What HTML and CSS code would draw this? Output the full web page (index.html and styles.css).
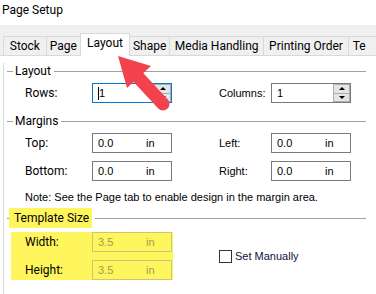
FILE: index.html
```html
<!DOCTYPE html>
<html lang="en">
<head>
    <meta charset="UTF-8">
    <title>Page Setup</title>
    <link rel="stylesheet" href="styles.css">
</head>
<body>
    <div class="dialog">
        <div class="title">Page Setup</div>

        <div class="tabs">
            <div class="tab w-stock">Stock</div>
            <div class="tab w-page">Page</div>
            <div class="tab w-layout active">Layout</div>
            <div class="tab w-shape">Shape</div>
            <div class="tab w-media">Media Handling</div>
            <div class="tab w-order">Printing Order</div>
            <div class="tab w-te">Te</div>
        </div>

        <div class="panel">
            <div class="group-head head-layout"><span class="gh-text">Layout</span></div>
            <div class="row">
                <span class="lbl">Rows:</span>
                <div class="field focused">
                    <span class="caret"></span><span class="val">1</span>
                    <div class="spin"><span class="spin-btn up"></span><span class="spin-btn down"></span></div>
                </div>
                <span></span>
                <span class="lbl tahoma">Columns:</span>
                <div class="field">
                    <span class="val">1</span>
                    <div class="spin"><span class="spin-btn up"></span><span class="spin-btn down"></span></div>
                </div>
            </div>

            <div class="group-head head-margins"><span class="gh-text">Margins</span></div>
            <div class="row">
                <span class="lbl">Top:</span>
                <div class="field"><span class="val">0.0</span><span class="unit">in</span></div>
                <span></span>
                <span class="lbl tahoma">Left:</span>
                <div class="field"><span class="val">0.0</span><span class="unit">in</span></div>
            </div>
            <div class="row row-second">
                <span class="lbl">Bottom:</span>
                <div class="field"><span class="val">0.0</span><span class="unit">in</span></div>
                <span></span>
                <span class="lbl tahoma">Right:</span>
                <div class="field"><span class="val">0.0</span><span class="unit">in</span></div>
            </div>
            <p class="note">Note: See the Page tab to enable design in the margin area.</p>

            <div class="group-head head-template"><span class="gh-text marked">Template Size</span></div>
            <div class="template-body">
                <div class="marked-block">
                    <div class="size-row">
                        <span class="lbl">Width:</span>
                        <div class="field disabled"><span class="val">3.5</span><span class="unit">in</span></div>
                    </div>
                    <div class="size-row">
                        <span class="lbl">Height:</span>
                        <div class="field disabled"><span class="val">3.5</span><span class="unit">in</span></div>
                    </div>
                </div>
                <label class="check">
                    <span class="check-box"></span>
                    <span class="check-text">Set Manually</span>
                </label>
            </div>
        </div>

        <!-- callout arrow pointing at the Layout tab -->
        <svg class="arrow" width="376" height="294" viewBox="0 0 376 294">
            <line x1="137" y1="76" x2="163" y2="104" stroke="#f2434c" stroke-width="13" stroke-linecap="round"/>
            <polygon points="118,56 151,66 127,88" fill="#f2434c"/>
        </svg>
    </div>
</body>
</html>
```

FILE: styles.css
```css
body {
    margin: 0;
    padding: 0;
    background: white;
    font-family: Roboto, Arial, sans-serif;
    font-size: 12px;
    color: black;
}
.dialog {
    position: relative;
    width: 376px;
    height: 294px;
    overflow: hidden;
}
.title {
    height: 25px;
    padding-left: 2px;
    line-height: 21px;
    box-sizing: border-box;
}
.tabs {
    display: flex;
    align-items: flex-end;
    height: 31px;
    padding-left: 3px;
    background-color: #f0f0f0;
    border-bottom: 1px solid #d9d9d9;
    box-sizing: border-box;
}
.tab {
    height: 19px;
    line-height: 18px;
    text-align: center;
    border: 1px solid #d9d9d9;
    border-bottom: none;
    margin-right: -1px;
    box-sizing: border-box;
    white-space: nowrap;
    overflow: hidden;
}
.tab.active {
    height: 23px;
    margin-bottom: -1px;
    line-height: 18px;
    background-color: white;
    position: relative;
    z-index: 1;
}
.w-stock { width: 45px; }
.w-page { width: 36px; }
.w-layout { width: 52px; }
.w-shape { width: 42px; }
.w-media { width: 98px; }
.w-order { width: 88px; }
.w-te { width: 30px; text-align: left; padding-left: 4px; }
.panel {
    margin-left: 3px;
    border-left: 1px solid #d9d9d9;
    height: 238px;
    padding-right: 10px;
    background: white;
}
.group-head {
    display: flex;
    align-items: center;
    height: 16px;
}
.group-head::before {
    content: "";
    width: 6px;
    height: 1px;
    margin-left: 3px;
    margin-right: 2px;
    background-color: #a0a0a0;
}
.group-head::after {
    content: "";
    flex: 1;
    height: 1px;
    margin-left: 3px;
    background-color: #a0a0a0;
}
.head-layout { margin-top: 7px; }
.head-margins { margin-top: 10px; }
.head-template {
    margin-top: 3px;
    height: 20px;
}
.head-template::before {
    width: 2px;
    margin-right: 0;
}
.marked {
    background-color: #fff55c;
    height: 20px;
    line-height: 20px;
    padding: 0 3px 0 5px;
}
.row {
    display: grid;
    grid-template-columns: 67px 80px 47px 52px 80px;
    align-items: center;
    height: 20px;
    margin-top: 4px;
    padding-left: 21px;
}
.row-second { margin-top: 8px; }
.lbl {
    white-space: nowrap;
}
.tahoma, .field, .check-text {
    font-family: "Liberation Sans", Arial, sans-serif;
    font-size: 11px;
}
.field {
    display: flex;
    align-items: center;
    width: 80px;
    height: 20px;
    padding-left: 5px;
    border: 1px solid #7a7a7a;
    box-sizing: border-box;
    background-color: white;
}
.field.focused {
    border-color: #0078d7;
}
.caret {
    width: 1px;
    height: 13px;
    background: black;
}
.val {
    width: 48px;
}
.spin {
    display: flex;
    flex-direction: column;
    margin-left: auto;
    width: 17px;
    height: 18px;
}
.spin-btn {
    flex: 1;
    display: flex;
    align-items: center;
    justify-content: center;
    background-color: #e5e5e5;
    border: 1px solid #adadad;
    box-sizing: border-box;
}
.spin-btn.down {
    margin-top: -1px;
}
.spin-btn.up::after {
    content: "";
    border-left: 3px solid transparent;
    border-right: 3px solid transparent;
    border-bottom: 3px solid black;
}
.spin-btn.down::after {
    content: "";
    border-left: 3px solid transparent;
    border-right: 3px solid transparent;
    border-top: 3px solid black;
}
.note {
    margin: 8px 0 0 21px;
    line-height: 16px;
    white-space: nowrap;
    font-family: "Liberation Sans", Arial, sans-serif;
    font-size: 11px;
}
.template-body {
    display: flex;
    align-items: center;
    margin-top: 4px;
}
.marked-block {
    display: flex;
    flex-direction: column;
    gap: 8px;
    width: 162px;
    margin-left: 7px;
    padding-left: 14px;
    box-sizing: border-box;
    background-color: #fff55c;
}
.size-row {
    display: flex;
    align-items: center;
    height: 20px;
}
.size-row .lbl {
    width: 67px;
}
.field.disabled {
    background: transparent;
    border-color: #cbc676;
    color: #a29e52;
}
.check {
    display: flex;
    align-items: center;
    margin-left: 46px;
}
.check-box {
    width: 13px;
    height: 13px;
    border: 1px solid #333;
    box-sizing: border-box;
    margin-right: 3px;
}
.check-text {
    color: #10103a;
}
.arrow {
    position: absolute;
    left: 0;
    top: 0;
    pointer-events: none;
    z-index: 5;
}
```
